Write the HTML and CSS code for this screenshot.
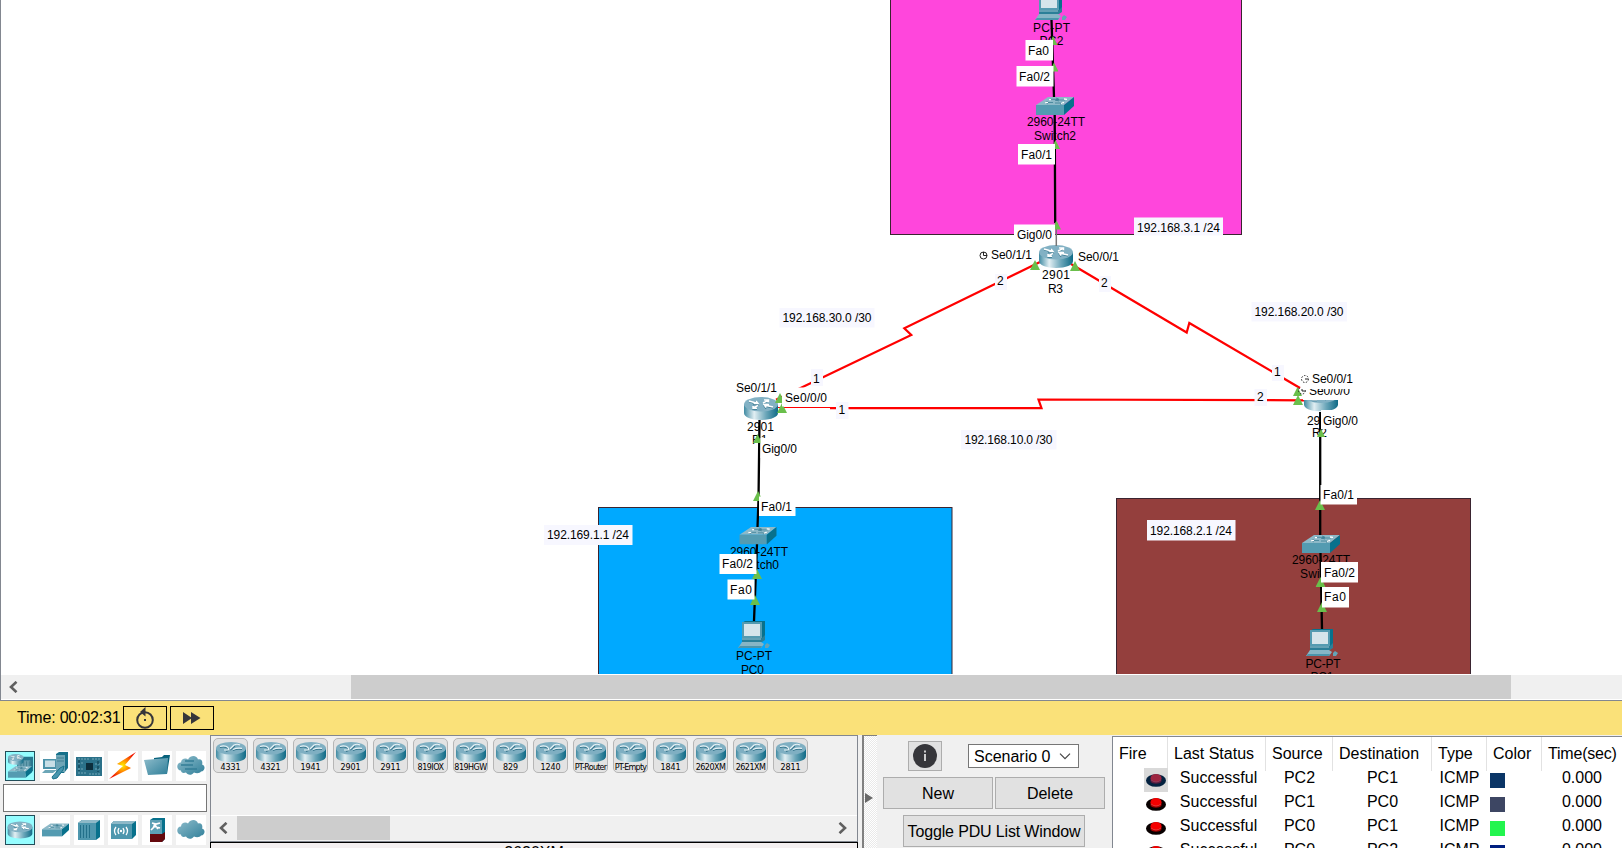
FILE: index.html
```
<!DOCTYPE html>
<html lang="en">
<head>
<meta charset="utf-8">
<title>Network simulator</title>
<link rel="stylesheet" href="styles.css">
</head>
<body>
<svg class="defs" width="0" height="0" aria-hidden="true">
  <defs>
    <linearGradient id="steel" x1="0" x2="1" y1="0" y2="0"><stop offset="0" stop-color="#3f8aa2"/><stop offset=".3" stop-color="#e2eff3"/><stop offset=".65" stop-color="#6ba6b9"/><stop offset="1" stop-color="#0e6a86"/></linearGradient>
    <linearGradient id="soft" x1="0" x2="1" y1="0" y2="1"><stop offset="0" stop-color="#8ebccb"/><stop offset="1" stop-color="#2f7f99"/></linearGradient>
    <radialGradient id="spark"><stop offset="0" stop-color="#ffef00"/><stop offset=".45" stop-color="#ff8a00"/><stop offset="1" stop-color="#f01800"/></radialGradient>
    <symbol id="router" viewBox="0 0 34 23">
      <path d="M0 7V16C0 20 7 23 17 23S34 20 34 16V7Z" fill="url(#steel)"/>
      <ellipse cx="17" cy="7.3" rx="17" ry="7.3" fill="#82b1c4"/>
      <g fill="none" stroke="#35758c" stroke-width="1.2" transform="translate(0 .8)"><path d="M5 4L13 6.5M11 3.6L14 6.8L9 6.8M29 10L20 8M22 10.8L20 8L25 7.8M14 8.5L9 11M9 9V11.3H13M19 6L24 3.5M20 3H24.5V5.5"/></g>
      <g fill="none" stroke="#fff" stroke-width="1.5"><path d="M5 4L13 6.3M9.5 6.5H14L12 4M29 10L20 8M25 7.5H20L22 10.5M14 8.5L9 11M9 9V11.3H13M19 6L24 3.5M20 3H24.5V5.5"/></g>
    </symbol>
    <symbol id="model" viewBox="0 0 30 20" preserveAspectRatio="none">
      <path d="M0 6V14C0 18 6 20 15 20S30 18 30 14V6Z" fill="url(#steel)"/>
      <ellipse cx="15" cy="6.300" rx="15" ry="6.300" fill="#7fafc2"/>
      <path d="M4 5.500Q9 4 13 7M10 9.500L15 7.500L19 4M17 8.500Q21 6.500 26 7.500" fill="none" stroke="#35758c" stroke-width="1.100"/>
      <path d="M4 4.500Q9 3 12 5.500L13 8H8M14 7L18 3Q21 1.500 24 3M17 7.500Q21 5.500 26 6.300" fill="none" stroke="#e8f3f6" stroke-width="1.200"/>
    </symbol>
    <symbol id="switch" viewBox="0 0 38 18">
      <path d="M0 8L12 0H38L28 8Z" fill="#8db9c8"/><path d="M0 8H28V18H0Z" fill="#549bb1"/><path d="M28 8L38 0V9L28 18Z" fill="#08718c"/>
      <path d="M14 2.3H22M20 1L23 2.3L19 3.5M29 3H21M22 2L20 3.2L23 4M11 5.5H17M12 4.3L9 5.8L12 6.8M19 6H26M25 5L27 6L24 7.3" fill="none" stroke="#3c7f95" stroke-width=".8"/>
      <path d="M13 2.6H15M28 2L31 2.3M9 5.8L12 5.4M25 6.4L28 5.4" stroke="#fff" stroke-width="1.3"/>
    </symbol>
    <symbol id="pc" viewBox="0 0 32 27">
      <path d="M4 2L7 0H27V16L23 20H4Z" fill="#08718c"/><path d="M4 1H24V17H4Z" fill="#549bb1"/><path d="M6 3H22V15H6Z" fill="#d5e5eb"/>
      <path d="M4 17H24L27 14V19L24 21H4Z" fill="#2b7f98"/><path d="M4 18H23" stroke="#9cc4d0"/>
      <path d="M4 21H23L26 23L23 27H0Z" fill="#86b5c5"/><path d="M0 27L2 25H24L23 27Z" fill="#4b95ac"/><path d="M27 24L29 22L32 24L30 27H27Z" fill="#65a3b6"/>
    </symbol>
    <symbol id="tri" viewBox="0 0 10 10"><path d="M5 0L10 10H0Z" fill="#6abf4b"/></symbol>
    <symbol id="cloud" viewBox="0 0 28 20"><path d="M4 15C-1 15-1 7 4 7C4 3 9 2 11 4C14-1 20 0 21 4C25 3 26 7 25 9C29 10 28 16 24 16C23 18 19 18 17 17C14 21 10 19 9 17C6 18 4 17 4 15Z" fill="url(#soft)"/></symbol>
    <symbol id="left" viewBox="0 0 10 12"><path d="M8.5 .8L3 6L8.5 11.2" fill="none" stroke="#606060" stroke-width="2.6"/></symbol>
    <symbol id="right" viewBox="0 0 10 12"><path d="M1.5 .8L7 6L1.5 11.2" fill="none" stroke="#606060" stroke-width="2.6"/></symbol>
    <symbol id="fire" viewBox="0 0 20 14"><ellipse cx="10" cy="7.500" rx="10" ry="6.300" fill="#080000"/><path d="M4.500 5V8C4.500 11.500 15.500 11.500 15.500 8V5Z" fill="#a60000"/><ellipse cx="10" cy="5" rx="5.500" ry="4" fill="#f40000"/><path d="M5 7Q10 11 15 7" fill="none" stroke="#ef5050" stroke-width=".7"/></symbol>
    <symbol id="firesel" viewBox="0 0 20 14"><ellipse cx="10" cy="7.500" rx="10" ry="6.300" fill="#03213f"/><path d="M4.500 5V8C4.500 11.500 15.500 11.500 15.500 8V5Z" fill="#5c1c3e"/><ellipse cx="10" cy="5" rx="5.500" ry="4" fill="#9c2440"/><path d="M5 7Q10 11 15 7" fill="none" stroke="#8f4a68" stroke-width=".7"/></symbol>
  </defs>
</svg>

<main class="workspace">
  <svg class="topology" width="1621" height="674" viewBox="1 0 1621 674">
    <g class="zones">
      <rect x="890.5" y="-2" width="351" height="236.5" fill="#ff46dc"/>
      <rect x="598.5" y="507.5" width="353.500" height="180" fill="#00a9ff"/>
      <rect x="1116.500" y="498.500" width="354" height="190" fill="#943f3d"/>
    </g>

    <g class="serial">
      <path d="M1040 262L904.300 328.300L911.300 335L776 399.800"/>
      <path d="M1071 264L1186.700 332.500L1189.300 323L1300 388"/>
      <path d="M830 408.200H1041.500L1038.500 399.500L1304 400.300"/>
      <path class="thin" d="M778 407.500H830"/>
    </g>

    <use href="#router" x="1039" y="245" width="34" height="23"/>
    <use href="#router" x="744" y="397" width="34" height="23"/>
    <use href="#router" x="1304" y="388.500" width="34" height="23"/>

    <g class="names">
      <text x="1033" y="32" textLength="37">PC-PT</text><text x="1039.500" y="45" textLength="24">PC2</text>
      <text x="1027" y="126" textLength="58">2960-24TT</text><text x="1034" y="140" textLength="42">Switch2</text>
      <text x="1042" y="279" textLength="28">2901</text><text x="1048" y="293" textLength="15">R3</text>
      <text x="747" y="431" textLength="27">2901</text><text x="752" y="444">R1</text>
      <text x="1307" y="424.500" textLength="26">2901</text><text x="1312" y="437" textLength="15">R2</text>
      <text x="730" y="556" textLength="58">2960-24TT</text><text x="737" y="569" textLength="42">Switch0</text>
      <text x="736" y="660" textLength="36">PC-PT</text><text x="741" y="674" textLength="23">PC0</text>
      <text x="1292" y="564" textLength="58">2960-24TT</text><text x="1300" y="578" textLength="43">Switch1</text>
      <text x="1305.500" y="668" textLength="35">PC-PT</text><text x="1310.500" y="681" textLength="23">PC1</text>
    </g>

    <g class="copper">
      <path d="M1051.500 20L1054 97M1054.700 115L1055.200 223"/>
      <path d="M759.500 420L758.500 500L757.500 527M757 544L754 621"/>
      <path d="M1320.200 412V535M1320.500 553L1322 629"/>
      <path class="grey" d="M1056.300 222V246"/>
    </g>

    <use href="#switch" x="1036" y="97" width="38" height="18"/>
    <use href="#switch" x="739" y="527" width="38" height="17.500"/>
    <use href="#switch" x="1302" y="535" width="38" height="18"/>
    <use href="#pc" x="1035" y="-7" width="32" height="27"/>
    <use href="#pc" x="738" y="621" width="32" height="27"/>
    <use href="#pc" x="1306" y="629" width="32" height="27"/>

    <g class="links">
      <use href="#tri" x="1048.500" y="36" width="9" height="9"/><use href="#tri" x="1049.500" y="62" width="9" height="10"/>
      <use href="#tri" x="1051" y="140" width="9" height="9"/><use href="#tri" x="1052" y="220" width="9" height="10"/>
      <use href="#tri" x="1030" y="260" width="10" height="10"/><use href="#tri" x="1070" y="261" width="10" height="10"/>
      <use href="#tri" x="775" y="393" width="10" height="10"/><use href="#tri" x="777" y="403" width="10" height="10"/>
      <use href="#tri" x="753" y="434" width="9" height="9"/><use href="#tri" x="1316" y="429" width="10" height="8"/>
      <use href="#tri" x="1293" y="387" width="9" height="9"/><use href="#tri" x="1293" y="395" width="10" height="10"/>
      <use href="#tri" x="753" y="491" width="10" height="10"/><use href="#tri" x="752" y="569" width="10" height="10"/><use href="#tri" x="750" y="595" width="10" height="10"/>
      <use href="#tri" x="1315" y="500" width="10" height="10"/><use href="#tri" x="1315.500" y="577" width="10" height="10"/><use href="#tri" x="1317" y="602" width="10" height="10"/>
    </g>

    <g class="ports">
      <rect x="1025.500" y="40" width="27.500" height="20.500"/><text x="1028" y="55" textLength="21">Fa0</text>
      <rect x="1016.500" y="66" width="37" height="20.500"/><text x="1019" y="81" textLength="31">Fa0/2</text>
      <rect x="1018" y="144" width="37" height="20.500"/><text x="1021" y="159" textLength="31">Fa0/1</text>
      <rect x="1014" y="224.500" width="41" height="19"/><text x="1017" y="239" textLength="35">Gig0/0</text>
      <text x="991" y="259" textLength="41">Se0/1/1</text><text x="1078" y="261" textLength="41">Se0/0/1</text>
      <text x="736" y="392" textLength="41">Se0/1/1</text>
      <rect x="782" y="387.500" width="46" height="19"/><text x="785" y="402" textLength="42">Se0/0/0</text>
      <rect x="760.500" y="438" width="38" height="20"/><text x="762" y="453" textLength="35">Gig0/0</text>
      <rect x="759" y="496.500" width="36.500" height="19.500"/><text x="761" y="511" textLength="31">Fa0/1</text>
      <rect x="719.500" y="554" width="37" height="20"/><text x="722" y="568" textLength="31">Fa0/2</text>
      <rect x="727.500" y="579.500" width="27" height="20"/><text x="730" y="594" textLength="22">Fa0</text>
      <rect x="1303" y="380" width="49" height="20"/><text x="1309" y="394.500" textLength="41">Se0/0/0</text>
      <circle class="dash" cx="1302" cy="390.500" r="3.500"/><path class="hand" d="M1302 391V388.500M1302 391H1305"/>
      <rect x="1301" y="370" width="54" height="19"/><text x="1312" y="383" textLength="41">Se0/0/1</text>
      <circle class="dash" cx="1305" cy="379" r="3.500"/><path class="hand" d="M1305 379H1308"/>
      <rect x="1321" y="410" width="38" height="19"/><text x="1323" y="425" textLength="35">Gig0/0</text>
      <rect x="1320.500" y="485" width="36.500" height="19.500"/><text x="1323" y="499" textLength="31">Fa0/1</text>
      <rect x="1321" y="562" width="37" height="20.500"/><text x="1324" y="577" textLength="31">Fa0/2</text>
      <rect x="1322" y="587" width="27" height="20.500"/><text x="1324" y="601" textLength="22">Fa0</text>
      <circle class="dial" cx="983.500" cy="255.500" r="3.500"/><path class="hand" d="M983.500 252V255.500H987"/>
    </g>

    <g class="notes">
      <rect x="1134" y="217.500" width="89" height="18"/><text x="1137" y="232" textLength="83">192.168.3.1 /24</text>
      <rect x="779.500" y="308" width="95" height="19.500"/><text x="782.500" y="322" textLength="89">192.168.30.0 /30</text>
      <rect x="1251.500" y="302" width="95.500" height="19.500"/><text x="1254.500" y="316" textLength="89">192.168.20.0 /30</text>
      <rect x="961" y="430" width="95.500" height="19.500"/><text x="964.500" y="444" textLength="88">192.168.10.0 /30</text>
      <rect x="544" y="525" width="88.500" height="20"/><text x="547" y="539" textLength="82">192.169.1.1 /24</text>
      <rect x="1147" y="520" width="88.500" height="20.500"/><text x="1150" y="535" textLength="82">192.168.2.1 /24</text>
      <rect x="995" y="274" width="12" height="16"/><text x="997" y="285">2</text>
      <rect x="1099" y="276" width="12" height="16"/><text x="1101" y="287">2</text>
      <rect x="811" y="369" width="12" height="17"/><text x="813" y="383">1</text>
      <rect x="836" y="402" width="12.500" height="17"/><text x="838.500" y="414">1</text>
      <rect x="1272" y="365" width="12" height="16"/><text x="1274" y="376">1</text>
      <rect x="1254.500" y="389" width="12.500" height="17"/><text x="1257" y="401">2</text>
    </g>
  </svg>
  <div class="hscroll"><svg class="arrow" viewBox="0 0 10 12"><use href="#left"/></svg><div class="thumb"></div></div>
</main>

<section class="timebar">
  <span class="time">Time: 00:02:31</span>
  <button class="tb"><svg width="20" height="22" viewBox="0 0 20 22"><circle cx="10" cy="13" r="7.800" fill="none" stroke="#36363a" stroke-width="2"/><path d="M5 5L10.500 0V9.500Z" fill="#36363a"/><rect x="9" y="12" width="2" height="2" fill="#36363a"/></svg></button>
  <button class="tb"><svg width="18" height="12" viewBox="0 0 18 12"><path d="M0 0L9 6L0 12ZM8 0L17.500 6L8 12Z" fill="#36363a"/></svg></button>
</section>

<section class="bottom">
  <aside class="palette">
    <div class="icons">
      <span class="ico on"><svg viewBox="0 0 30 30"><path d="M12 8L16 5H29V20L26 23H12Z" fill="#28768e"/><path d="M13 9H26V21H13Z" fill="#659eb0"/><path d="M16 10V19M19 10V19M22 10V19M25 10V19" stroke="#427f92"/><use href="#router" x="2" y="2" width="17" height="12"/><use href="#switch" x="2" y="15" width="26" height="13"/></svg></span>
      <span class="ico"><svg viewBox="0 0 30 30"><path d="M16 3L19 1H28V17L24 22H16Z" fill="#17718b"/><path d="M16 4H25V21H16Z" fill="#6da5b6"/><path d="M17 7H24M17 10H24" stroke="#417f92"/><path d="M3 8H16V18H3Z" fill="#4d93a9"/><path d="M5 9.500H15V16H5Z" fill="#c8dfe6"/><path d="M2 22L5 19H17L13 22Z" fill="#6ca6b7"/><path d="M12 26L20 17L24 15L23 19L17 27L13 28Z" fill="#4795ad" stroke="#17718b"/></svg></span>
      <span class="ico"><svg viewBox="0 0 30 30"><path d="M2 6H28V25H2Z" fill="#2b7189"/><path d="M12 12H19V19H12Z" fill="#0d2e3c"/><path d="M4 8H15M18 8H27M4 22H12M15 23H27M4 12H9M4 18H9M21 13H27M21 18H26" stroke="#73a8b7" stroke-width="1.200" stroke-dasharray="2 1"/><path d="M5 9V20M24 10V21" stroke="#164b5d" stroke-width="1.500" stroke-dasharray="3 2"/></svg></span>
      <span class="ico"><svg viewBox="0 0 30 30"><path d="M28 1L9 13L15 15L1 28L23 17L17 14Z" fill="url(#spark)"/></svg></span>
      <span class="ico"><svg viewBox="0 0 30 30"><path d="M12 7L20 6L22 4H28L25 23H12Z" fill="#08627c"/><path d="M2 9L26 7L25 23L6 24Z" fill="url(#soft)"/></svg></span>
      <span class="ico"><svg viewBox="0 0 30 30"><use href="#cloud" x="1" y="4" width="28" height="21"/><path d="M9 10H18M5 14H17M9 18H21" stroke="#337e96" stroke-width="1.700"/></svg></span>
    </div>
    <div class="search"></div>
    <div class="icons">
      <span class="ico on"><svg viewBox="0 0 30 30"><use href="#router" x="1.500" y="5" width="27" height="20"/></svg></span>
      <span class="ico"><svg viewBox="0 0 30 30"><use href="#switch" x="2" y="8" width="27" height="14"/></svg></span>
      <span class="ico"><svg viewBox="0 0 30 30"><path d="M4 8L8 5H26V22L22 25H4Z" fill="#08718c"/><path d="M4 8L8 5H26L22 8Z" fill="#8db9c8"/><path d="M4 8H22V25H4Z" fill="#4e97ae"/><path d="M6.500 10V23M9.500 10V23M12.500 10V23M15.500 10V23" stroke="#23708a"/></svg></span>
      <span class="ico"><svg viewBox="0 0 30 30"><path d="M3 9L6 6H28V20L24 24H3Z" fill="#08718c"/><path d="M3 9L6 6H28L24 9Z" fill="#8db9c8"/><path d="M3 9H24V24H3Z" fill="#4e97ae"/><path d="M8 12Q5 16 8 20M11 13Q9 16 11 19M18 12Q21 16 18 20M15 13Q17 16 15 19" fill="none" stroke="#fff" stroke-width="1.300"/><circle cx="13" cy="16" r="1.200" fill="#fff"/></svg></span>
      <span class="ico"><svg viewBox="0 0 30 30"><path d="M8 5L11 3H23V24L20 27H8Z" fill="#08718c"/><path d="M8 5H20V19H8Z" fill="#5da0b4"/><path d="M8 19H20L23 17V24L20 27H8Z" fill="#65090d"/><path d="M10 8L14 9L18 8M11 11L18 13M14 10L9 15M12 9L16 14" stroke="#fff" stroke-width="1.700" fill="none"/></svg></span>
      <span class="ico"><svg viewBox="0 0 30 30"><use href="#cloud" x="1" y="4" width="28" height="21"/></svg></span>
    </div>
  </aside>

  <div class="devices">
    <div class="panel">
      <div class="tiles">
        <div class="tile"><svg><use href="#model"/></svg><span>4331</span></div>
        <div class="tile"><svg><use href="#model"/></svg><span>4321</span></div>
        <div class="tile"><svg><use href="#model"/></svg><span>1941</span></div>
        <div class="tile"><svg><use href="#model"/></svg><span>2901</span></div>
        <div class="tile"><svg><use href="#model"/></svg><span>2911</span></div>
        <div class="tile snug"><svg><use href="#model"/></svg><span>819IOX</span></div>
        <div class="tile snug"><svg><use href="#model"/></svg><span>819HGW</span></div>
        <div class="tile"><svg><use href="#model"/></svg><span>829</span></div>
        <div class="tile"><svg><use href="#model"/></svg><span>1240</span></div>
        <div class="tile tight"><svg><use href="#model"/></svg><span>PT-Router</span></div>
        <div class="tile tight"><svg><use href="#model"/></svg><span>PT-Empty</span></div>
        <div class="tile"><svg><use href="#model"/></svg><span>1841</span></div>
        <div class="tile snug"><svg><use href="#model"/></svg><span>2620XM</span></div>
        <div class="tile snug"><svg><use href="#model"/></svg><span>2621XM</span></div>
        <div class="tile"><svg><use href="#model"/></svg><span>2811</span></div>
      </div>
      <div class="dscroll"><svg class="arrow" viewBox="0 0 10 12"><use href="#left"/></svg><div class="thumb"></div><svg class="arrow end" viewBox="0 0 10 12"><use href="#right"/></svg></div>
    </div>
    <div class="caption">2620XM</div>
  </div>

  <div class="handle"><svg width="8" height="10" viewBox="0 0 8 10"><path d="M0 0L8 5L0 10Z" fill="#686868"/></svg></div>

  <div class="scenario">
    <div class="line1">
      <button class="btn info"><svg width="24" height="24" viewBox="0 0 24 24"><circle cx="12" cy="12" r="12" fill="#36363a"/><path d="M12 10V17M12 6.500V8.500" stroke="#ccc" stroke-width="2"/></svg></button>
      <div class="select"><span>Scenario 0</span><svg width="12" height="7" viewBox="0 0 12 7"><path d="M1 .7L6 5.700L11 .7" fill="none" stroke="#444" stroke-width="1.200"/></svg></div>
    </div>
    <div class="line2"><button class="btn">New</button><button class="btn">Delete</button></div>
    <button class="btn toggle">Toggle PDU List Window</button>
  </div>

  <div class="pdu">
    <div class="row head"><span>Fire</span><span>Last Status</span><span>Source</span><span>Destination</span><span>Type</span><span>Color</span><span>Time(sec)</span></div>
    <div class="row"><span class="firecell sel"><svg width="20" height="14"><use href="#firesel"/></svg></span><span class="status">Successful</span><span>PC2</span><span>PC1</span><span>ICMP</span><span><i class="swatch navy"></i></span><span>0.000</span></div>
    <div class="row"><span class="firecell"><svg width="20" height="14"><use href="#fire"/></svg></span><span class="status">Successful</span><span>PC1</span><span>PC0</span><span>ICMP</span><span><i class="swatch slate"></i></span><span>0.000</span></div>
    <div class="row"><span class="firecell"><svg width="20" height="14"><use href="#fire"/></svg></span><span class="status">Successful</span><span>PC0</span><span>PC1</span><span>ICMP</span><span><i class="swatch green"></i></span><span>0.000</span></div>
    <div class="row"><span class="firecell"><svg width="20" height="14"><use href="#fire"/></svg></span><span class="status">Successful</span><span>PC0</span><span>PC2</span><span>ICMP</span><span><i class="swatch blue"></i></span><span>0.000</span></div>
  </div>
</section>
</body>
</html>
```
FILE: styles.css
```
* { box-sizing: border-box; }
html, body { margin: 0; height: 848px; overflow: hidden; }
body { width: 1622px; background: #f0f0f0; color: #000; font: 16px/18px "Liberation Sans", Arial, sans-serif; display: flex; flex-direction: column; }
svg { display: block; flex: none; }
.defs { height: 0; width: 0; }
button { font: inherit; color: inherit; padding: 0; margin: 0; border-radius: 0; }

.workspace { height: 701px; flex: none; background: #fff; border-left: 1px solid #828790; border-bottom: 1px solid #828790; }
.topology { overflow: hidden; font-size: 12px; margin-bottom: 1px; }
.zones rect { stroke: #3a2430; stroke-width: 1; }
.serial path { fill: none; stroke: #f00; stroke-width: 2.2; }
.serial .thin { stroke-width: 1; }
.copper path { fill: none; stroke: #000; stroke-width: 2.3; }
.copper .grey { stroke: #777; stroke-width: 1.5; }
.ports rect { fill: #fff; }
.notes rect { fill: #f7f7ff; }
.dial, .dash { fill: none; stroke: #222; stroke-width: 1; }
.dash { stroke-dasharray: 1.5 1.5; }
.hand { fill: none; stroke: #222; stroke-width: 1; }

.hscroll { height: 24px; display: flex; background: #f0f0f0; margin-bottom: 1px; }
.arrow { width: 10px; height: 12px; margin: 6px 0 0 7px; }
.hscroll .thumb { width: 1160px; height: 24px; margin-left: 333px; background: #cdcdcd; }

.timebar { height: 34px; flex: none; background: #fae179; display: flex; align-items: flex-start; padding: 5px 0 0 17px; }
.time { width: 106px; padding-top: 3px; white-space: nowrap; letter-spacing: -.2px; }
.tb { width: 44px; height: 24px; border: 1px solid #000; background: transparent; margin-right: 3px; display: flex; align-items: center; justify-content: center; }

.bottom { height: 113px; flex: none; display: flex; align-items: flex-start; overflow: hidden; }
.palette { width: 210px; padding: 16px 0 0 3px; }
.icons { display: flex; gap: 4px; padding-left: 2px; }
.ico { width: 30px; height: 30px; background: #fff; }
.ico:first-child { margin-right: 1px; }
.ico.on { background: #95fdff; border: 1px solid #234e5a; }
.search { width: 204px; height: 28px; margin: 3px 0; background: #fff; border: 1px solid #767676; }

.devices { width: 648px; height: 113px; }
.panel { height: 107px; border: 1px solid #828790; display: flex; flex-direction: column; }
.tiles { height: 80px; padding: 2px; display: flex; gap: 5px; border-bottom: 1px solid #fff; }
.tile { width: 35px; height: 35px; flex: none; border: 1px solid #b6b6b6; border-radius: 5px; background: #e3e3e3; display: flex; flex-direction: column; align-items: center; padding-top: 3px; }
.tile svg { width: 30px; height: 20px; }
.tile span { font: 8px/10px "DejaVu Sans", Verdana, sans-serif; white-space: nowrap; letter-spacing: -.1px; padding-top: 1px; }
.snug span { letter-spacing: -.5px; }
.tight span { letter-spacing: -.75px; }
.dscroll { height: 25px; display: flex; }
.dscroll .thumb { width: 153px; height: 24px; margin-left: 9px; background: #cdcdcd; }
.dscroll .end { margin-left: auto; margin-right: 9px; }
.caption { height: 20px; border: 1px solid #000; background: #f4f0f1; text-align: center; font-size: 16px; line-height: 18px; padding-top: 1px; }

.handle { width: 15px; height: 113px; margin-left: 4px; border-left: 2px solid #808080; border-top: 1px solid #808080; background: repeating-conic-gradient(#e9e9e9 0 25%, #fff 0 50%) 0 0 / 2px 2px; padding: 57px 0 0 1px; }

.scenario { width: 235px; padding: 6px 0 0 6px; }
.btn { height: 32px; background: #e1e1e1; border: 1px solid #adadad; display: flex; justify-content: center; align-items: center; padding-top: 2px; }
.line1 { display: flex; align-items: center; padding-left: 25px; height: 30px; gap: 26px; }
.info { width: 34px; height: 30px; padding-top: 0; }
.select { width: 111px; height: 24px; background: #fff; border: 1px solid #767676; display: flex; align-items: center; justify-content: space-between; padding: 1px 7px 0 5px; }
.line2 { display: flex; gap: 2px; margin: 6px 0; }
.line2 .btn { width: 110px; }
.toggle { width: 182px; margin-left: 20px; white-space: nowrap; letter-spacing: -.15px; }

.pdu { width: 510px; height: 112px; margin-top: 1px; border-left: 1px solid #828790; border-top: 1px solid #828790; background: #fff; overflow: hidden; }
.row { display: grid; grid-template-columns: 55px 98px 67px 99px 55px 55px 80px; height: 24px; line-height: 20px; }
.row > span { text-align: center; white-space: nowrap; }
.row > .status { padding-left: 3px; }
.head { height: 31px; line-height: 34px; }
.head > span { text-align: left; padding-left: 6px; border-right: 1px solid #e2e2e2; }
.head > span:last-child { border-right: 0; letter-spacing: -.2px; }
.firecell { width: 24px; height: 24px; margin-left: 31px; padding: 5px 0 0 2px; }
.firecell.sel { background: #d9d9d9; }
.swatch { display: block; width: 15px; height: 15px; margin: 5px 0 0 3px; }
.navy { background: #0a3566; }
.slate { background: #3d4663; }
.green { background: #22f54e; }
.blue { background: #001f80; }
```
